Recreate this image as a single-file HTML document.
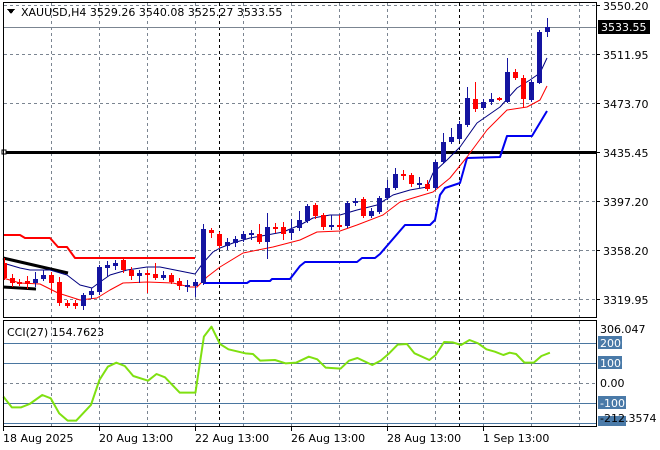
<!DOCTYPE html>
<html><head><meta charset="utf-8"><style>
html,body{margin:0;padding:0;background:#fff;width:660px;height:450px;overflow:hidden}
svg{display:block}
text{font-family:"DejaVu Sans","Liberation Sans",sans-serif;font-size:11px;fill:#000}
</style></head><body>
<svg width="660" height="450" viewBox="0 0 660 450" xmlns="http://www.w3.org/2000/svg" shape-rendering="crispEdges">
<rect width="660" height="450" fill="#fff"/>
<!-- grid main -->
<g stroke="#7b8591" stroke-width="1" stroke-dasharray="3,3">
<path d="M51.5 3V317M99.5 3V317M147.5 3V317M195.5 3V317M243.5 3V317M291.5 3V317M339.5 3V317M387.5 3V317M435.5 3V317M483.5 3V317M531.5 3V317M579.5 3V317"/>
<path d="M4 5.5H596M4 54.5H596M4 103.5H596M4 201.5H596M4 250.5H596M4 299.5H596"/>
<path d="M51.5 321V426M99.5 321V426M147.5 321V426M195.5 321V426M243.5 321V426M291.5 321V426M339.5 321V426M387.5 321V426M435.5 321V426M483.5 321V426M531.5 321V426M579.5 321V426"/>
<path d="M4 383.5H596"/>
</g>
<g stroke="#000" stroke-dasharray="3,3"><path d="M219.5 3V317M459.5 3V317M219.5 321V426M459.5 321V426"/></g>
<path d="M4 27.5H596" stroke="#7b8591"/>
<!-- sub levels -->
<path d="M4 343.5H596M4 363.5H596M4 403.5H596M4 423.5H596" stroke="#4a76a0"/>
<!-- horizontal black -->
<path d="M3 152.5H597" stroke="#000" stroke-width="3"/>
<rect x="2" y="150" width="4" height="4" fill="#fff" stroke="#000" stroke-width="1"/>
<g shape-rendering="auto" fill="none" stroke-linejoin="round">
<!-- red stepped -->
<polyline stroke="#f00" stroke-width="2" points="3,235 20,235 25,238 50,238 58,247 67,247 75,258 195,258"/>
<!-- black lines -->
<polyline stroke="#000" stroke-width="3" points="3,258 68,273"/>
<polyline stroke="#000" stroke-width="3" points="3,287 36,289"/>
<!-- blue stepped -->
<polyline stroke="#0000f0" stroke-width="2" points="203,283 247,283 250,281 270,281 272,279 290,279 300,266 305,262 357,262 362,258 375,258 380,254 405,225 430,225 435,220 440,195 445,188 460,183 467,158 500,157 507,136 532,136 547,111"/>
<!-- navy MA -->
<polyline stroke="#000080" stroke-width="1" points="3,263 20,268 30,270 50,270 67,275 80,285 92,288 100,282 110,275 127,270 147,267 160,267 180,271 195,274 203,263 213,252 220,248 233,243 250,238 267,235 283,232 300,225 313,218 330,215 340,215 357,210 377,205 393,195 410,190 427,187 433,173 447,160 460,147 477,123 500,107 517,88 530,80 540,73 547,58"/>
<!-- red MA -->
<polyline stroke="#f00" stroke-width="1" points="3,278 20,283 40,284 58,293 80,300 97,298 110,290 123,283 147,282 173,283 190,287 197,287 207,277 220,267 243,253 273,247 300,240 317,232 340,231 357,225 383,215 400,202 413,198 433,192 450,178 467,157 487,130 507,110 527,107 540,100 547,86"/>
<!-- CCI -->
<g transform="translate(0,300) scale(0.423,0.33333)">
<polyline vector-effect="non-scaling-stroke" stroke="#7fe010" stroke-width="2" points="8,290 28,322 50,322 70,312 100,285 120,295 140,340 160,362 180,362 215,315 235,240 255,200 275,188 295,198 315,228 350,242 370,222 390,232 425,278 462,278 482,110 500,80 520,132 540,148 580,160 598,162 615,182 650,180 675,190 700,188 730,170 750,178 770,203 805,206 825,182 845,174 880,195 900,182 920,160 940,134 962,132 980,160 1015,180 1030,165 1050,126 1070,127 1090,135 1110,120 1130,130 1150,148 1170,155 1190,165 1205,158 1220,162 1240,188 1262,188 1280,168 1300,158"/>
</g>
</g>
<!-- candles -->
<g id="c"></g>
<g>
<path d="M4.5 258V280M12.5 274V287M19.5 279V286M27.5 276V289M51.5 272V293M59.5 277V306M67.5 300V308M75.5 300V309M123.5 257V273M131.5 267V280M147.5 270V293M155.5 263V280M171.5 273V284M179.5 278V290M211.5 228V238M219.5 232V248M259.5 224V244M275.5 223V233M283.5 222V240M315.5 203V219M323.5 213V230M339.5 215V230M363.5 197V218M403.5 170V180M411.5 173V187M427.5 180V191M475.5 82V112M499.5 97V101M515.5 69V80M523.5 75V108" stroke="#f00"/>
<path d="M35.5 272V287M43.5 270V281M83.5 293V310M91.5 288V299M99.5 265V295M107.5 261V277M115.5 260V270M139.5 270V283M163.5 271V280M187.5 280V292M195.5 279V297M203.5 224V285M227.5 238V250M235.5 236V247M243.5 231V242M251.5 230V240M267.5 213V259M291.5 219V240M299.5 211V231M307.5 204V223M331.5 215V230M347.5 201V228M355.5 198V206M371.5 208V218M379.5 196V214M387.5 180V200M395.5 168V190M419.5 177V188M435.5 160V190M443.5 133V164M451.5 128V144M459.5 121V141M467.5 87V127M483.5 99V110M491.5 93V105M507.5 58V103M531.5 80V102M539.5 30V84M547.5 18V37" stroke="#1414a0"/>
<g fill="#f00">
<rect x="3" y="263" width="4" height="15"/><rect x="10" y="278" width="5" height="5"/><rect x="17" y="282" width="5" height="2"/><rect x="25" y="281" width="5" height="3"/><rect x="49" y="275" width="5" height="8"/><rect x="57" y="282" width="5" height="21"/><rect x="65" y="303" width="5" height="3"/><rect x="73" y="303" width="5" height="3"/><rect x="121" y="260" width="5" height="10"/><rect x="129" y="270" width="5" height="6"/><rect x="145" y="273" width="5" height="2"/><rect x="153" y="274" width="5" height="4"/><rect x="169" y="275" width="5" height="7"/><rect x="177" y="281" width="5" height="5"/><rect x="209" y="230" width="5" height="3"/><rect x="217" y="234" width="5" height="12"/><rect x="257" y="234" width="5" height="8"/><rect x="273" y="227" width="5" height="2"/><rect x="281" y="227" width="5" height="7"/><rect x="313" y="205" width="5" height="11"/><rect x="321" y="215" width="5" height="12"/><rect x="337" y="225" width="5" height="2"/><rect x="361" y="199" width="5" height="17"/><rect x="401" y="174" width="5" height="2"/><rect x="409" y="175" width="5" height="9"/><rect x="425" y="184" width="5" height="5"/><rect x="473" y="99" width="5" height="10"/><rect x="497" y="98" width="5" height="2"/><rect x="513" y="72" width="5" height="6"/><rect x="521" y="78" width="5" height="21"/>
</g>
<g fill="#1414a0">
<rect x="33" y="279" width="5" height="4"/><rect x="41" y="275" width="5" height="4"/><rect x="81" y="295" width="5" height="11"/><rect x="89" y="291" width="5" height="4"/><rect x="97" y="267" width="5" height="25"/><rect x="105" y="265" width="5" height="3"/><rect x="113" y="263" width="5" height="3"/><rect x="137" y="273" width="5" height="3"/><rect x="161" y="275" width="5" height="3"/><rect x="185" y="285" width="5" height="2"/><rect x="193" y="282" width="5" height="4"/><rect x="201" y="229" width="5" height="54"/><rect x="225" y="242" width="5" height="4"/><rect x="233" y="239" width="5" height="4"/><rect x="241" y="234" width="5" height="5"/><rect x="249" y="233" width="5" height="2"/><rect x="265" y="227" width="5" height="15"/><rect x="289" y="229" width="5" height="4"/><rect x="297" y="220" width="5" height="8"/><rect x="305" y="206" width="5" height="15"/><rect x="329" y="225" width="5" height="2"/><rect x="345" y="203" width="5" height="23"/><rect x="353" y="201" width="5" height="2"/><rect x="369" y="211" width="5" height="5"/><rect x="377" y="198" width="5" height="14"/><rect x="385" y="188" width="5" height="10"/><rect x="393" y="174" width="5" height="14"/><rect x="417" y="183" width="5" height="2"/><rect x="433" y="162" width="5" height="26"/><rect x="441" y="142" width="5" height="20"/><rect x="449" y="137" width="5" height="5"/><rect x="457" y="124" width="5" height="15"/><rect x="465" y="98" width="5" height="27"/><rect x="481" y="102" width="5" height="6"/><rect x="489" y="99" width="5" height="3"/><rect x="505" y="72" width="5" height="30"/><rect x="529" y="82" width="5" height="18"/><rect x="537" y="32" width="5" height="51"/><rect x="545" y="27" width="5" height="5"/>
</g>
</g>
<!-- borders -->
<rect x="3.5" y="2.5" width="593" height="315" fill="none" stroke="#000"/>
<rect x="3.5" y="320.5" width="593" height="106" fill="none" stroke="#000"/>
<!-- header -->
<path d="M7 9H15L11 14Z" fill="#000"/>
<text x="21" y="16">XAUUSD,H4  3529.26 3540.08 3525.27 3533.55</text>
<text x="7" y="336">CCI(27) 154.7623</text>
<!-- right axis -->
<g>
<path d="M597 5.5H600M597 54.5H600M597 103.5H600M597 152.5H600M597 201.5H600M597 250.5H600M597 299.5H600" stroke="#000"/>
<text x="603" y="10">3550.20</text>
<rect x="598" y="20" width="52" height="14" fill="#000"/>
<text x="601" y="31" style="fill:#fff">3533.55</text>
<text x="603" y="59">3511.95</text>
<text x="603" y="108">3473.70</text>
<text x="603" y="157">3435.45</text>
<text x="603" y="206">3397.20</text>
<text x="603" y="255">3358.20</text>
<text x="603" y="304">3319.95</text>
<text x="600" y="333">306.047</text>
<rect x="598" y="336" width="24" height="13" fill="#4a7aa8"/><text x="600" y="347" style="fill:#fff">200</text>
<rect x="598" y="356" width="24" height="13" fill="#4a7aa8"/><text x="600" y="367" style="fill:#fff">100</text>
<text x="600" y="387">0.00</text>
<rect x="598" y="396" width="28" height="13" fill="#4a7aa8"/><text x="600" y="407" style="fill:#fff">-100</text>
<rect x="598" y="416" width="28" height="10" fill="#4a7aa8"/>
<text x="600" y="422">-212.3574</text>
</g>
<!-- date axis -->
<path d="M3.5 427V431M99.5 427V431M195.5 427V431M291.5 427V431M387.5 427V431M483.5 427V431" stroke="#000"/>
<text x="3" y="442">18 Aug 2025</text>
<text x="99" y="442">20 Aug 13:00</text>
<text x="195" y="442">22 Aug 13:00</text>
<text x="291" y="442">26 Aug 13:00</text>
<text x="387" y="442">28 Aug 13:00</text>
<text x="483" y="442">1 Sep 13:00</text>
</svg>
</body></html>
